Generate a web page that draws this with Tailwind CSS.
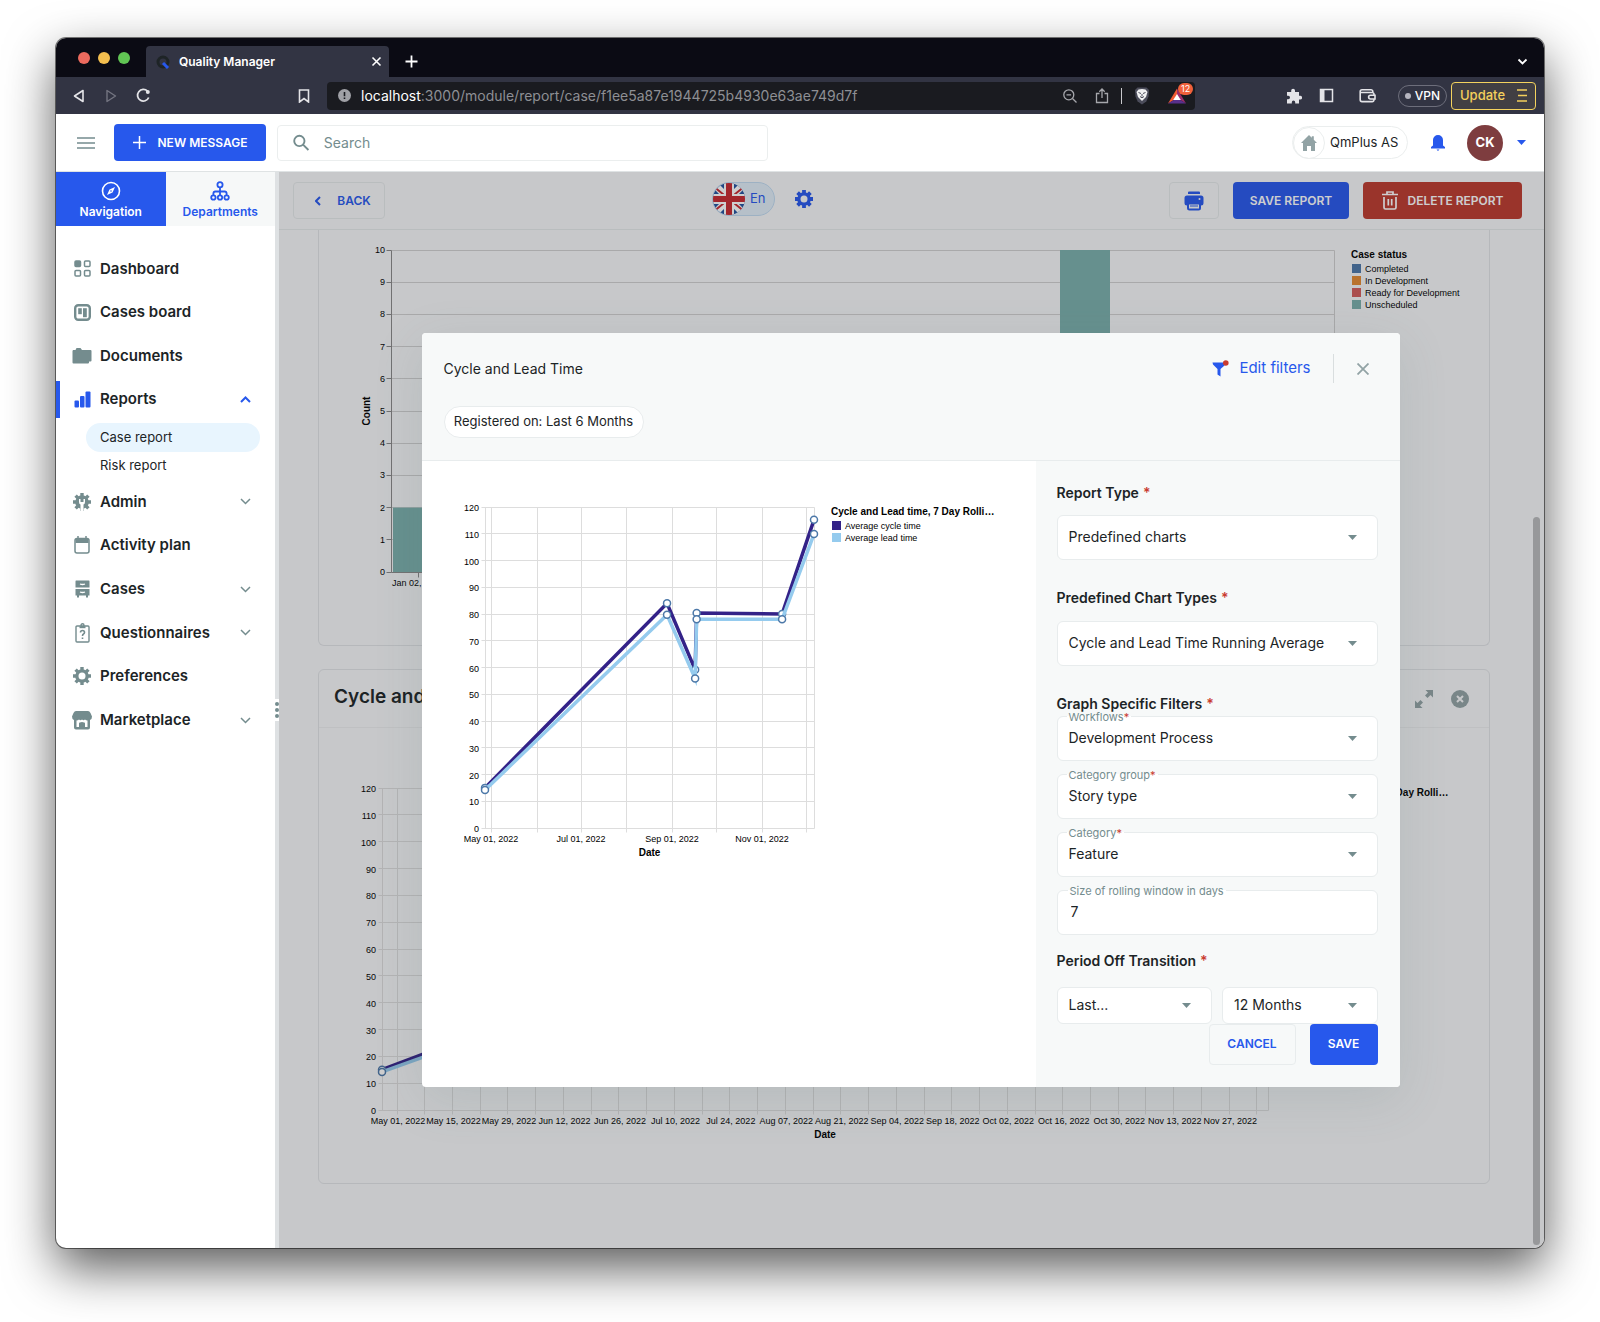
<!DOCTYPE html>
<html lang="en">
<head>
  <meta charset="UTF-8" />
  <meta name="viewport" content="width=device-width, initial-scale=1.0" />
  <title>Quality Manager</title>
  <script src="https://cdn.jsdelivr.net/npm/@tailwindcss/browser@4"></script>
</head>
<body class="bg-white font-['Inter','Liberation_Sans',sans-serif] text-[#1c2426]">
  <div class="px-14 pt-[38px] pb-[74px]">
    <div class="overflow-hidden rounded-[10px] bg-white ring-1 ring-black/50 shadow-[0_20px_50px_rgba(0,0,0,0.65)]">

      <!-- Browser tab strip -->
      <div class="flex h-[39px] items-end bg-[#0b0b14] text-white">
        <div class="flex h-[39px] w-[90px] items-center gap-2 pl-[22px]">
          <span class="size-3 rounded-full bg-[#ec6a5e]"></span>
          <span class="size-3 rounded-full bg-[#f4bf4f]"></span>
          <span class="size-3 rounded-full bg-[#61c554]"></span>
        </div>
        <div class="flex h-[31px] w-[243px] items-center rounded-t bg-[#323443] pr-[7px] pl-[10px]">
          <svg class="mr-[9px] size-[14px]" viewBox="0 0 14 14" fill="none"><circle cx="7" cy="7" r="5" stroke="#1e2426" stroke-width="3" /><path d="M7 8l5 5" stroke="#2758ec" stroke-width="3" /></svg>
          <span class="flex-1 text-[12px] font-semibold">Quality Manager</span>
          <button aria-label="Close tab"><svg class="size-[11px]" viewBox="0 0 11 11" stroke="currentColor" stroke-width="1.6"><path d="M1.5 1.5l8 8M9.5 1.5l-8 8" /></svg></button>
        </div>
        <button aria-label="New tab" class="ml-4 flex h-[31px] items-center"><svg class="size-[13px]" viewBox="0 0 13 13" stroke="currentColor" stroke-width="1.8"><path d="M6.5 0.5v12M0.5 6.5h12" /></svg></button>
        <button aria-label="Search tabs" class="mr-4 ml-auto flex h-[31px] items-center"><svg class="size-[11px]" viewBox="0 0 11 11" fill="none" stroke="currentColor" stroke-width="1.8"><path d="M1.5 3.5l4 4 4-4" /></svg></button>
      </div>

      <!-- Browser toolbar -->
      <div class="flex h-[37px] items-center bg-[#323443] pr-2 text-[#e4e4e8]">
        <div class="flex w-[216px] items-center gap-[18px] pl-4">
          <button aria-label="Back"><svg class="size-[14px]" viewBox="0 0 14 14" fill="none" stroke="currentColor" stroke-width="1.6" stroke-linejoin="round"><path d="M11 1.5v11L2.5 7z" /></svg></button>
          <button aria-label="Forward" class="text-[#737480]"><svg class="size-[14px]" viewBox="0 0 14 14" fill="none" stroke="currentColor" stroke-width="1.4" stroke-linejoin="round"><path d="M3 1.5v11L11.5 7z" /></svg></button>
          <button aria-label="Reload"><svg class="size-[15px]" viewBox="0 0 15 15" fill="none" stroke="currentColor" stroke-width="1.8"><path d="M12.7 9.5A5.8 5.8 0 1 1 11.5 3.2" /><circle cx="11.8" cy="4" r="2" fill="currentColor" stroke="none" /></svg></button>
        </div>
        <button aria-label="Bookmark" class="mr-4 ml-[25px]"><svg class="size-[14px]" viewBox="0 0 14 14" fill="none" stroke="currentColor" stroke-width="1.6"><path d="M2.5 1h9v12L7 9.5 2.5 13z" /></svg></button>
        <div class="flex h-7 flex-1 items-center rounded bg-[#1a1b20] pr-[3px] pl-[11px]">
          <svg class="mr-[10px] size-[13px]" viewBox="0 0 13 13"><circle cx="6.5" cy="6.5" r="6.5" fill="#a0a1a6" /><path d="M6.5 3v4.2M6.5 8.5v1.6" stroke="#1a1b20" stroke-width="1.6" /></svg>
          <span class="flex-1 text-[14px] text-[#8e8f94]"><span class="text-white">localhost</span>:3000/module/report/case/f1ee5a87e1944725b4930e63ae749d7f</span>
          <div class="flex items-center text-[#a6a7ac]">
            <svg class="size-[14px]" viewBox="0 0 14 14" fill="none" stroke="currentColor" stroke-width="1.3"><circle cx="5.8" cy="5.8" r="5" /><path d="M9.5 9.5l4 4M3.500 5.8h4.6" /></svg>
            <svg class="ml-[18px] h-4 w-[14px]" viewBox="0 0 14 16" fill="none" stroke="currentColor" stroke-width="1.3"><path d="M4.5 5.5h-3v9h11v-9h-3M7 10V1M4.3 3.700L7 1l2.700 2.700" /></svg>
            <span class="mx-3 h-4 w-px bg-[#c9c9cd]"></span>
            <svg class="h-[18px] w-4" viewBox="0 0 16 18"><path d="M3.5 0.5h9L15 3l-0.500 6.500-2.200 5L8 17.500l-4.300-3-2.200-5L1 3z" fill="#4b4c5a" /><path d="M4.5 2.500L8 2l3.500 0.500 2 2.500-1.500 5L8 14l-4-4L2.500 5z" fill="#f0f0f2" /><path d="M4.500 5.500l2.500 1M11.500 5.500l-2.500 1M6 9.500l2 1.300 2-1.300M8 7v2.500" fill="none" stroke="#4b4c5a" /></svg>
            <span class="relative ml-[18px] block h-4 w-[24px]">
              <svg class="h-4 w-[18px]" viewBox="0 0 18 16"><path d="M9 0.5L0 15.5 9 10z" fill="#f15a32" /><path d="M9 0.5l9 15L9 10z" fill="#9b2c6b" /><path d="M0 15.5h18L9 10z" fill="#58308c" /><path d="M9 6l3.800 6H5.2z" fill="#fff" /></svg>
              <span class="absolute -top-[5px] left-[10px] rounded-md bg-[#f0603a] px-[3px] text-[9px] leading-[12px] text-white">12</span>
            </span>
          </div>
        </div>
        <div class="ml-[91px] flex items-center">
          <svg class="size-4" viewBox="0 0 16 16" fill="currentColor"><path d="M1 4h4.200V2.600a1.900 1.900 0 0 1 3.800 0V4h4v3.800h1.200a1.900 1.900 0 0 1 0 3.800H13V15.500H9.200v-1.300a1.700 1.700 0 0 0-3.400 0v1.300H1v-4.300h1.300a1.700 1.700 0 0 0 0-3.400H1z" /></svg>
          <svg class="ml-[17px] size-[15px]" viewBox="0 0 15 15"><path d="M1.500 1.500h12v12h-12z" fill="none" stroke="currentColor" stroke-width="1.500" /><path d="M1.500 1.500h4v12h-4z" fill="currentColor" /></svg>
          <svg class="ml-[25px] size-[17px]" viewBox="0 0 17 17" fill="none" stroke="currentColor" stroke-width="1.600"><path d="M13.800 5.500V4.500a1.800 1.800 0 0 0-1.800-1.800H3A1.800 1.800 0 0 0 1.200 4.500v8.300a1.800 1.800 0 0 0 1.800 1.800h10.200a1.800 1.800 0 0 0 1.800-1.800M1.500 5.500h11.700a1.800 1.800 0 0 1 1.800 1.800v0.700M16 8.200h-4.500a1.900 1.900 0 0 0 0 3.800H16z" /></svg>
          <button class="ml-[22px] flex h-[22px] w-[49px] items-center justify-center gap-1 rounded-full border border-[#6d6e7b] text-[12px] font-medium text-white"><span class="size-[6px] rounded-full bg-[#b5b5bf]"></span>VPN</button>
          <button class="ml-1 flex h-7 w-[85px] items-center justify-between rounded border border-[#f4d35e] bg-[#413f43] px-2 text-[13px] font-medium text-[#f4cf5c]">Update<svg class="h-[13px] w-[10px]" viewBox="0 0 10 13" stroke="currentColor" stroke-width="1.400"><path d="M0 1h10M1 6.500h9M0 12h10" /></svg></button>
        </div>
      </div>

      <!-- App header -->
      <header class="flex h-[57px] items-center">
        <button aria-label="Menu" class="mr-[19px] ml-[21px]"><svg class="h-3 w-[18px]" viewBox="0 0 18 12" stroke="#748c8e" stroke-width="1.500"><path d="M0 1h18M0 6h18M0 11h18" /></svg></button>
        <button class="flex h-[37px] w-[152px] items-center justify-center gap-3 rounded bg-[#2758ec] text-[12px] font-semibold text-white"><svg class="size-[13px]" viewBox="0 0 13 13" stroke="currentColor" stroke-width="1.500"><path d="M6.500 0v13M0 6.500h13" /></svg>NEW MESSAGE</button>
        <label class="ml-[11px] flex h-9 w-[491px] items-center gap-[14px] rounded border border-[#ebeeee] pl-[15px]">
          <svg class="size-[18px]" viewBox="0 0 18 18" fill="none" stroke="#748c8e" stroke-width="2"><circle cx="6.800" cy="6.800" r="5.500" /><path d="M11 11l5.500 5.500" /></svg>
          <input type="text" placeholder="Search" aria-label="Search" class="w-full bg-transparent text-[14px] outline-none placeholder:text-[#748c8e]" />
        </label>
        <div class="ml-auto flex items-center pr-[18px]">
          <button class="flex h-[33px] w-[116px] items-center rounded-full border border-[#ebeeee] text-[13px]"><span class="mr-[5px] flex size-8 items-center justify-center rounded-full border border-[#ebeeee]"><svg class="size-4" viewBox="0 0 16 16" fill="#92a3a5"><path d="M8 0l2.800 2.700V1.300h2v3.400L16 8h-2v8h-4v-5H6v5H2V8H0z" /></svg></span>QmPlus AS</button>
          <button aria-label="Notifications" class="ml-[22px]"><svg class="size-4" viewBox="0 0 16 16" fill="#2758ec"><path d="M8 0a5 5 0 0 1 5 5v5.500l2 1.500v1.500H1V12l2-1.500V5a5 5 0 0 1 5-5zM6.500 14.500h3L8 16z" /></svg></button>
          <button class="ml-[21px] size-9 rounded-full bg-[#7e3d3f] text-[13px] font-bold text-white">CK</button>
          <svg class="ml-[14px] h-[5px] w-[9px]" viewBox="0 0 9 5" fill="#2758ec"><path d="M0 0h9L4.500 5z" /></svg>
        </div>
      </header>

      <div class="flex border-t border-[#dfe3e4]">
        <!-- Sidebar -->
        <aside class="w-[219px] shrink-0">
          <div class="grid h-[54px] grid-cols-2 text-[12px] font-semibold">
            <button class="flex flex-col items-center justify-center gap-[2px] bg-[#2758ec] pt-[3px] text-white">
              <svg class="size-5" viewBox="0 0 20 20" fill="none" stroke="currentColor" stroke-width="1.600"><circle cx="10" cy="10" r="8.500" /><path d="M14 6l-2.500 5.500L6 14l2.500-5.500z" fill="currentColor" stroke="none" /><circle cx="10" cy="10" r="0.800" fill="#2758ec" stroke="none" /></svg>
              Navigation
            </button>
            <button class="flex flex-col items-center justify-center gap-[2px] bg-[#f6f8f8] pt-[3px] text-[#2758ec]">
              <svg class="size-5" viewBox="0 0 20 20" fill="none" stroke="currentColor" stroke-width="1.800"><circle cx="10" cy="3.800" r="2.600" /><circle cx="3.400" cy="16.500" r="2.200" /><circle cx="10" cy="16.500" r="2.200" /><circle cx="16.600" cy="16.500" r="2.200" /><path d="M10 6.500v8M3.400 14.300V12.500q0-2 2-2h9.200q2 0 2 2v1.800" /></svg>
              Departments
            </button>
          </div>
          <nav class="pt-[21px] text-[15px] font-semibold">
            <div class="grid h-[174px] auto-rows-fr">
              <a href="#" class="flex items-center pl-4">
                <span class="mr-2 flex w-5 justify-center"><svg class="size-[17px]" viewBox="0 0 17 17" fill="none" stroke="#748c8e" stroke-width="1.500"><rect x="1" y="1" width="5.500" height="5.500" rx="1" fill="#748c8e" /><rect x="10.500" y="1" width="5.500" height="5.500" rx="1" /><rect x="1" y="10.500" width="5.500" height="5.500" rx="1" /><rect x="10.500" y="10.500" width="5.500" height="5.500" rx="1" /></svg></span>
                Dashboard
              </a>
              <a href="#" class="flex items-center pl-4">
                <span class="mr-2 flex w-5 justify-center"><svg class="size-[17px]" viewBox="0 0 17 17" fill="#748c8e"><rect x="1.200" y="1.200" width="14.600" height="14.600" rx="3" fill="none" stroke="#748c8e" stroke-width="2.400" /><rect x="4.200" y="4.200" width="3.600" height="6" /><rect x="9" y="4.200" width="3.800" height="9" /></svg></span>
                Cases board
              </a>
              <a href="#" class="flex items-center pl-4">
                <span class="mr-2 flex w-5 justify-center"><svg class="h-4 w-5" viewBox="0 0 20 16" fill="#748c8e"><path d="M1 2h2.500L4.500 0h4l1.500 2h8.500q1 0 1 1v9.500q0 1-1 1h-1.500v1q0 1-1 1H1.500q-1 0-1-1V3z" /></svg></span>
                Documents
              </a>
              <a href="#" class="relative flex items-center pl-4">
                <span class="absolute top-[3px] bottom-[3px] left-0 w-1 bg-[#2758ec]"></span>
                <span class="mr-2 flex w-5 justify-center"><svg class="size-[17px]" viewBox="0 0 17 17" fill="#2758ec"><rect x="0.500" y="9.500" width="4.500" height="7" rx="1" /><rect x="6" y="5" width="4.500" height="11.500" rx="1" /><rect x="11.500" y="0.500" width="5" height="16" rx="1" /></svg></span>
                Reports
                <svg class="mr-6 ml-auto h-[7px] w-[11px]" viewBox="0 0 11 7" fill="none" stroke="#2758ec" stroke-width="2"><path d="M1 6l4.500-4.500L10 6" /></svg>
              </a>
            </div>
            <div class="mr-[15px] ml-[30px] pt-[2px] text-[13px] font-normal">
              <a href="#" class="flex h-[29px] items-center rounded-full bg-[#e8f5fe] pl-[14px]">Case report</a>
              <a href="#" class="flex h-[28px] items-center pl-[14px]">Risk report</a>
            </div>
            <div class="grid h-[262px] auto-rows-fr">
              <a href="#" class="flex items-center pl-4">
                <span class="mr-2 flex w-5 justify-center"><svg class="size-[18px]" viewBox="0 0 18 18"><path d="M9 0v18M0 9h18M2.600 2.600l12.800 12.800M15.400 2.600L2.600 15.400" stroke="#748c8e" stroke-width="3.400" /><circle cx="9" cy="9" r="6.800" fill="#748c8e" /><path d="M6 6v3q0 2 1.500 2.500V18h3v-6.500Q12 11 12 9V6h-1.500v3h-3V6z" fill="#fff" /></svg></span>
                Admin
                <svg class="mr-6 ml-auto h-[7px] w-[11px]" viewBox="0 0 11 7" fill="none" stroke="#748c8e" stroke-width="1.500"><path d="M1 1l4.500 4.500L10 1" /></svg>
              </a>
              <a href="#" class="flex items-center pl-4">
                <span class="mr-2 flex w-5 justify-center"><svg class="h-[18px] w-4" viewBox="0 0 16 18" fill="none" stroke="#748c8e" stroke-width="1.500"><rect x="1" y="2.500" width="14" height="14.500" rx="2" /><path d="M1.500 3h13v4h-13z" fill="#748c8e" stroke="none" /><path d="M4 0v4M12 0v4" /></svg></span>
                Activity plan
              </a>
              <a href="#" class="flex items-center pl-4">
                <span class="mr-2 flex w-5 justify-center"><svg class="h-[18px] w-[15px]" viewBox="0 0 15 18"><path d="M1 0.500h13q0.500 0 0.500 1v6h-14v-6q0-1 0.500-1zM0.500 9h14v6.500h-1.500V17.500h-2v-2H4v2H2v-2H0.500z" fill="#748c8e" /><path d="M5 4q2.500 1 5 0M5 12q2.500 1 5 0" fill="none" stroke="#fff" stroke-width="1.300" /></svg></span>
                Cases
                <svg class="mr-6 ml-auto h-[7px] w-[11px]" viewBox="0 0 11 7" fill="none" stroke="#748c8e" stroke-width="1.500"><path d="M1 1l4.500 4.500L10 1" /></svg>
              </a>
              <a href="#" class="flex items-center pl-4">
                <span class="mr-2 flex w-5 justify-center"><svg class="h-5 w-[15px]" viewBox="0 0 15 20" fill="none" stroke="#748c8e" stroke-width="1.400"><rect x="1" y="3" width="13" height="16" rx="1" /><circle cx="7.500" cy="2.200" r="1.500" /><path d="M4.500 4.200h6" stroke-width="2" /><path d="M5.500 9.500q0-2 2-2t2 2q0 1-1 1.500t-1 2M7.500 14.500v1.500" stroke-width="1.600" /></svg></span>
                Questionnaires
                <svg class="mr-6 ml-auto h-[7px] w-[11px]" viewBox="0 0 11 7" fill="none" stroke="#748c8e" stroke-width="1.500"><path d="M1 1l4.500 4.500L10 1" /></svg>
              </a>
              <a href="#" class="flex items-center pl-4">
                <span class="mr-2 flex w-5 justify-center"><svg class="size-[18px]" viewBox="0 0 18 18"><path d="M9 0v18M0 9h18M2.600 2.600l12.800 12.800M15.400 2.600L2.600 15.400" stroke="#748c8e" stroke-width="3.400" /><circle cx="9" cy="9" r="6.800" fill="#748c8e" /><circle cx="9" cy="9" r="3.500" fill="#fff" /></svg></span>
                Preferences
              </a>
              <a href="#" class="flex items-center pl-4">
                <span class="mr-2 flex w-5 justify-center"><svg class="h-[19px] w-5" viewBox="0 0 20 19"><path d="M4 0h12q1.500 0 2.500 2L20 5.500q0 3-2 3.500v7.500q0 2-2 2H4q-2 0-2-2V9Q0 8.500 0 5.500L1.500 2Q2.500 0 4 0z" fill="#748c8e" /><path d="M4.500 9.500q1.500 0 2.500-1 1.500 1.500 3 0 1.500 1.500 3 0 1 1 2.500 1V16H13v-3.500q0-1.500-3-1.500t-3 1.500V16H4.500z" fill="#fff" /></svg></span>
                Marketplace
                <svg class="mr-6 ml-auto h-[7px] w-[11px]" viewBox="0 0 11 7" fill="none" stroke="#748c8e" stroke-width="1.500"><path d="M1 1l4.500 4.500L10 1" /></svg>
              </a>
            </div>
          </nav>
        </aside>

        <!-- Resize handle -->
        <div class="flex w-1 shrink-0 items-center justify-center bg-[#dee1e3]">
          <div class="flex h-[22px] flex-col items-center justify-center gap-[2px] bg-white">
            <span class="size-1 rounded-full bg-[#748c8e]"></span>
            <span class="size-1 rounded-full bg-[#748c8e]"></span>
            <span class="size-1 rounded-full bg-[#748c8e]"></span>
          </div>
        </div>

        <main class="relative min-w-0 flex-1 bg-[#f7f8f9]">
          <!-- Report toolbar -->
          <div class="flex h-[58px] items-center border-b border-[#e5e9ea] pr-[22px] pl-[14px] text-[12px] font-semibold">
            <button class="flex h-[37px] w-[92px] items-center justify-center gap-4 rounded border border-[#e5e9ea] pl-2 text-[#2758ec]"><svg class="h-[10px] w-[6px]" viewBox="0 0 6 10" fill="none" stroke="currentColor" stroke-width="2"><path d="M5 1L1 5l4 4" /></svg>BACK</button>
            <div class="flex flex-1 items-center justify-center pr-[29px] pb-1">
              <button class="flex h-[34px] w-[63px] items-center gap-[5px] rounded-full border border-[#c0daf0] bg-[#e0eef8] text-[13px] font-normal text-[#2758ec]">
                <svg class="size-8 rounded-full" viewBox="0 0 32 32"><path d="M0 0h32v32H0z" fill="#22529f" /><path d="M0 0l32 32M32 0L0 32" stroke="#fff" stroke-width="7" /><path d="M0 3l32 26M32 3L0 29" stroke="#c8282f" stroke-width="2" /><path d="M16 0v32M0 16h32" stroke="#fff" stroke-width="10" /><path d="M16 0v32M0 16h32" stroke="#c8282f" stroke-width="6" /></svg>
                En
              </button>
              <button aria-label="Settings" class="ml-5"><svg class="size-[18px]" viewBox="0 0 18 18"><path d="M9 0v18M0 9h18M2.600 2.600l12.800 12.800M15.400 2.600L2.600 15.400" stroke="#2758ec" stroke-width="3.800" /><circle cx="9" cy="9" r="6.800" fill="#2758ec" /><circle cx="9" cy="9" r="3.500" fill="#f7f8f9" /></svg></button>
            </div>
            <button aria-label="Print" class="flex h-[37px] w-[50px] items-center justify-center rounded border border-[#e5e9ea]"><svg class="size-5" viewBox="0 0 20 20"><path d="M5 0.500h10q1 0 1 1V3H4V1.500q0-1 1-1zM3 4.500h14q2.500 0 2.500 2.500v5q0 2.500-2.500 2.500V17q0 2.500-2.500 2.500h-9Q3 19.500 3 17v-2.500Q0.500 14.500 0.500 12V7Q0.500 4.500 3 4.500z" fill="#2758ec" /><path d="M5 13.500h10v4H5z" fill="#f7f8f9" /><path d="M6 15h8" stroke="#2758ec" /><circle cx="15.500" cy="8" r="1" fill="#f7f8f9" /></svg></button>
            <button class="ml-[14px] h-[37px] w-[116px] rounded bg-[#2758ec] text-white">SAVE REPORT</button>
            <button class="ml-[14px] flex h-[37px] w-[159px] items-center justify-center gap-[10px] rounded bg-[#bd3a2e] text-white"><svg class="h-[19px] w-4" viewBox="0 0 16 19" fill="none" stroke="currentColor" stroke-width="1.700"><path d="M0 3.500h16M5 3.500V1h6v2.500M2 6v10.500q0 1.500 1.500 1.500h9q1.500 0 1.500-1.500V6M6.300 8v6.500M9.700 8v6.500" /></svg>DELETE REPORT</button>
          </div>

          <div class="pr-[54px] pb-16 pl-[39px]">
            <section class="h-[416px] rounded-b-md border-x border-b border-[#e0e3e6]">
              <svg id="status-chart" class="size-full font-['Liberation_Sans',sans-serif]"></svg>
            </section>
            <section class="mt-[23px] flex h-[515px] flex-col rounded-md border border-[#e0e3e6]">
              <div class="flex h-[58px] items-center border-b border-[#eceeef] pr-5 pl-[15px]">
                <h2 class="flex-1 pb-[3px] text-[19px] font-semibold">Cycle and Lead Time</h2>
                <button aria-label="Expand"><svg class="size-[18px]" viewBox="0 0 18 18" fill="#92a3a5"><path d="M10.500 0H18v7.500l-2.500-2.500-3 3-2.500-2.500 3-3zM7.500 18H0v-7.500l2.500 2.500 3-3L8 12.500l-3 3z" /></svg></button>
                <button aria-label="Remove" class="ml-[18px]"><svg class="size-[18px]" viewBox="0 0 18 18"><circle cx="9" cy="9" r="9" fill="#92a3a5" /><path d="M6 6l6 6M12 6l-6 6" stroke="#f7f8f9" stroke-width="2" /></svg></button>
              </div>
              <svg id="report-chart" class="min-h-0 w-full flex-1 font-['Liberation_Sans',sans-serif]"></svg>
            </section>
          </div>

          <!-- Backdrop and dialog -->
          <div class="absolute inset-0 flex items-center justify-center bg-[#1f2023]/22 pr-[2px]">
            <div class="absolute right-1 bottom-[3px] h-[728px] w-[7px] rounded-full bg-[#97989a]"></div>
            <div role="dialog" aria-labelledby="dialog-title" class="w-[978px] max-w-full overflow-hidden rounded bg-white shadow-[0_12px_50px_rgba(80,110,110,0.14)]">
              <div class="h-[128px] border-b border-[#e8eced] bg-[#f7f9f9] pt-[21px] pl-[22px]">
                <div class="flex h-[29px] items-center">
                  <h3 id="dialog-title" class="flex-1 text-[14px]">Cycle and Lead Time</h3>
                  <button class="flex items-center gap-[10px] text-[15px] text-[#2758ec]"><svg class="size-[17px]" viewBox="0 0 17 17"><path d="M0.500 2.500H13L12.500 5.500 8.500 9v7.500L5.500 14.500V9L1 4.500z" fill="#2758ec" /><circle cx="13.800" cy="3" r="2.800" fill="#c93b2f" /></svg>Edit filters</button>
                  <span class="ml-[22px] h-[29px] w-px bg-[#d9dedf]"></span>
                  <button aria-label="Close" class="mr-[31px] ml-[23px]"><svg class="size-3" viewBox="0 0 12 12" stroke="#92a3a5" stroke-width="1.800"><path d="M0.500 0.500l11 11M11.500 0.500l-11 11" /></svg></button>
                </div>
                <span class="mt-[23px] flex h-8 w-[200px] items-center justify-center rounded-full border border-[#e8eced] bg-white pb-px text-[13px]">Registered on: Last 6 Months</span>
              </div>
              <div class="flex">
                <div class="min-w-0 flex-1">
                  <svg id="preview-chart" class="h-[420px] w-full font-['Liberation_Sans',sans-serif]"></svg>
                </div>
                <form class="w-[364px] shrink-0 bg-[#f7f9f9] pt-5 pr-[22px] pb-[22px] pl-[21px] text-[14px]">
                  <label for="report-type" class="flex h-6 gap-1 text-[14px] leading-6 font-semibold">Report Type <span class="text-[#c93b2f]">*</span></label>
                  <div class="relative mt-[10px]">
                    <select id="report-type" class="h-[45px] w-full appearance-none rounded-md border border-[#e8eced] bg-white px-[11px] pb-[3px]"><option>Predefined charts</option></select>
                    <svg class="pointer-events-none absolute top-5 right-[21px] h-[5px] w-[9px]" viewBox="0 0 9 5" fill="#748c8e"><path d="M0 0h9L4.500 5z" /></svg>
                  </div>
                  <label for="chart-type" class="mt-[26px] flex h-6 gap-1 text-[14px] leading-6 font-semibold">Predefined Chart Types <span class="text-[#c93b2f]">*</span></label>
                  <div class="relative mt-[11px]">
                    <select id="chart-type" class="h-[45px] w-full appearance-none rounded-md border border-[#e8eced] bg-white px-[11px] pb-[3px]"><option>Cycle and Lead Time Running Average</option></select>
                    <svg class="pointer-events-none absolute top-5 right-[21px] h-[5px] w-[9px]" viewBox="0 0 9 5" fill="#748c8e"><path d="M0 0h9L4.500 5z" /></svg>
                  </div>
                  <h4 class="mt-[26px] flex h-6 gap-1 text-[14px] leading-6 font-semibold">Graph Specific Filters <span class="text-[#c93b2f]">*</span></h4>
                  <div class="flex flex-col gap-[13px]">
                    <div class="relative">
                      <label for="workflows" class="absolute -top-[6px] left-[10px] bg-linear-to-b from-transparent from-40% to-white to-40% px-[2px] text-[11px] leading-[14px] text-[#748c8e]">Workflows<span class="text-[#c93b2f]">*</span></label>
                      <select id="workflows" class="h-[45px] w-full appearance-none rounded-md border border-[#e8eced] bg-white px-[11px] pb-[3px]"><option>Development Process</option></select>
                      <svg class="pointer-events-none absolute top-5 right-[21px] h-[5px] w-[9px]" viewBox="0 0 9 5" fill="#748c8e"><path d="M0 0h9L4.500 5z" /></svg>
                    </div>
                    <div class="relative">
                      <label for="category-group" class="absolute -top-[6px] left-[10px] bg-linear-to-b from-transparent from-40% to-white to-40% px-[2px] text-[11px] leading-[14px] text-[#748c8e]">Category group<span class="text-[#c93b2f]">*</span></label>
                      <select id="category-group" class="h-[45px] w-full appearance-none rounded-md border border-[#e8eced] bg-white px-[11px] pb-[3px]"><option>Story type</option></select>
                      <svg class="pointer-events-none absolute top-5 right-[21px] h-[5px] w-[9px]" viewBox="0 0 9 5" fill="#748c8e"><path d="M0 0h9L4.500 5z" /></svg>
                    </div>
                    <div class="relative">
                      <label for="category" class="absolute -top-[6px] left-[10px] bg-linear-to-b from-transparent from-40% to-white to-40% px-[2px] text-[11px] leading-[14px] text-[#748c8e]">Category<span class="text-[#c93b2f]">*</span></label>
                      <select id="category" class="h-[45px] w-full appearance-none rounded-md border border-[#e8eced] bg-white px-[11px] pb-[3px]"><option>Feature</option></select>
                      <svg class="pointer-events-none absolute top-5 right-[21px] h-[5px] w-[9px]" viewBox="0 0 9 5" fill="#748c8e"><path d="M0 0h9L4.500 5z" /></svg>
                    </div>
                    <div class="relative">
                      <label for="window-size" class="absolute -top-[6px] left-[11px] bg-linear-to-b from-transparent from-40% to-white to-40% px-[2px] text-[11px] leading-[14px] text-[#748c8e]">Size of rolling window in days</label>
                      <input id="window-size" type="text" value="7" class="block h-[45px] w-full rounded-md border border-[#e8eced] bg-white px-[13px] pb-[3px]" />
                    </div>
                  </div>
                  <label for="period" class="mt-[14px] flex h-6 gap-1 text-[14px] leading-6 font-semibold">Period Off Transition <span class="text-[#c93b2f]">*</span></label>
                  <div class="mt-[14px] grid grid-cols-2 gap-[10px]">
                    <div class="relative">
                      <select id="period" class="block h-[37px] w-full appearance-none rounded-md border border-[#e8eced] bg-white px-[11px] pb-[3px]"><option>Last...</option></select>
                      <svg class="pointer-events-none absolute top-4 right-[21px] h-[5px] w-[9px]" viewBox="0 0 9 5" fill="#748c8e"><path d="M0 0h9L4.500 5z" /></svg>
                    </div>
                    <div class="relative">
                      <select aria-label="Months" class="block h-[37px] w-full appearance-none rounded-md border border-[#e8eced] bg-white px-[11px] pb-[3px]"><option>12 Months</option></select>
                      <svg class="pointer-events-none absolute top-4 right-[21px] h-[5px] w-[9px]" viewBox="0 0 9 5" fill="#748c8e"><path d="M0 0h9L4.500 5z" /></svg>
                    </div>
                  </div>
                  <div class="flex justify-end gap-[14px] text-[12px] font-semibold">
                    <button type="button" class="h-[41px] w-[87px] rounded border border-[#e8eced] pb-[2px] text-[#2758ec]">CANCEL</button>
                    <button type="button" class="h-[41px] w-[68px] rounded bg-[#2758ec] pb-[2px] text-white">SAVE</button>
                  </div>
                </form>
              </div>
            </div>
          </div>
        </main>
      </div>
    </div>
  </div>

  <script>
    const NS = 'http://www.w3.org/2000/svg';

    function add(svg, tag, attrs, text) {
      const el = document.createElementNS(NS, tag);
      for (const key in attrs) el.setAttribute(key, attrs[key]);
      if (text !== undefined) el.textContent = text;
      svg.appendChild(el);
      return el;
    }

    function line(svg, x1, y1, x2, y2, color) {
      const snap = v => Math.floor(v) + 0.5;
      add(svg, 'line', { x1: snap(x1), y1: snap(y1), x2: snap(x2), y2: snap(y2), stroke: color });
    }

    function label(svg, x, y, text, anchor = 'start', bold = false) {
      add(svg, 'text', { x, y, 'text-anchor': anchor, 'font-size': bold ? 10 : 9, 'font-weight': bold ? 700 : 400, fill: '#000' }, text);
    }

    function legend(svg, x, y, title, entries) {
      label(svg, x, y + 4, title, 'start', true);
      entries.forEach(([name, color], i) => {
        add(svg, 'rect', { x: x + 1, y: y + 10 + i * 12, width: 9, height: 9, fill: color });
        label(svg, x + 14, y + 18 + i * 12, name);
      });
    }

    // share of the time span, cycle time, lead time
    const series = [
      [0, 15, 14.2],
      [0.5533, 84, 79.7],
      [0.6387, 59.2, 55.9],
      [0.6433, 80.4, 78],
      [0.903, 80, 78],
      [1, 115.2, 109.9]
    ];

    function lineChart(id, { left, right, top, bottom, ticks, dates }) {
      const svg = document.getElementById(id);
      const y = v => bottom - (v / 120) * (bottom - top);
      for (let v = 0; v <= 120; v += 10) {
        line(svg, left - 4, y(v), right, y(v), '#dddddd');
        label(svg, left - 6, Math.round(y(v)) + 4, v, 'end');
      }
      line(svg, left, top, left, bottom, '#dddddd');
      line(svg, right, top, right, bottom, '#dddddd');
      ticks.forEach(t => line(svg, left + t, top, left + t, bottom + 4, '#dddddd'));
      dates.forEach(([t, name]) => label(svg, left + t, bottom + 14, name, 'middle'));
      label(svg, (left + right) / 2, bottom + 28, 'Date', 'middle', true);

      ['#332288', '#95cbee'].forEach((color, s) => {
        const points = series.map(p => [left + p[0] * (right - left), y(p[s + 1])]);
        add(svg, 'polyline', { points: points.join(' '), fill: 'none', stroke: color, 'stroke-width': 3.5, 'stroke-miterlimit': 10 });
        points.forEach(([cx, cy]) => add(svg, 'circle', { cx, cy, r: 3.5, fill: '#fff', stroke: '#4c78a8', 'stroke-width': 1.5 }));
      });

      legend(svg, right + 17, top + 4, 'Cycle and Lead time, 7 Day Rolli…', [['Average cycle time', '#332288'], ['Average lead time', '#95cbee']]);
    }

    lineChart('preview-chart', {
      left: 63, right: 392, top: 46, bottom: 367,
      ticks: [6, 52, 96, 141, 187, 231, 277, 321],
      dates: [[6, 'May 01, 2022'], [96, 'Jul 01, 2022'], [187, 'Sep 01, 2022'], [277, 'Nov 01, 2022']]
    });

    const sundays = ['May 01', 'May 15', 'May 29', 'Jun 12', 'Jun 26', 'Jul 10', 'Jul 24', 'Aug 07', 'Aug 21', 'Sep 04', 'Sep 18', 'Oct 02', 'Oct 16', 'Oct 30', 'Nov 13', 'Nov 27'];
    const week = 27.74;
    lineChart('report-chart', {
      left: 63, right: 949, top: 60, bottom: 382,
      ticks: Array.from({ length: 32 }, (_, i) => 15 + i * week),
      dates: sundays.map((d, i) => [16 + i * 2 * week, `${d}, 2022`])
    });

    // Stacked count per week
    const status = document.getElementById('status-chart');
    const count = v => 342 - v * 32.2;
    for (let v = 0; v <= 10; v++) {
      line(status, 72, count(v), 1015, count(v), '#d0d0d0');
      line(status, 67, count(v), 72, count(v), '#888888');
      label(status, 66, Math.round(count(v)) + 3, v, 'end');
    }
    line(status, 1015, count(10), 1015, count(0), '#cfcfcf');
    add(status, 'rect', { x: 74, y: count(2), width: 50, height: count(0) - count(2), fill: '#7ab0ac' });
    add(status, 'rect', { x: 741, y: count(10), width: 50, height: count(0) - count(10), fill: '#7ab0ac' });
    line(status, 72, count(10), 72, count(0), '#888888');
    line(status, 72, count(0), 1015, count(0), '#888888');
    line(status, 99, count(0), 99, count(0) + 5, '#888888');
    label(status, 99, 356, 'Jan 02, 2022', 'middle');
    add(status, 'text', { x: 0, y: 0, transform: 'translate(51 181) rotate(-90)', 'text-anchor': 'middle', 'font-size': 10, 'font-weight': 700 }, 'Count');
    legend(status, 1032, 24, 'Case status', [['Completed', '#4c78a8'], ['In Development', '#e58930'], ['Ready for Development', '#d35b5a'], ['Unscheduled', '#7ab0ac']]);
  </script>
</body>
</html>
